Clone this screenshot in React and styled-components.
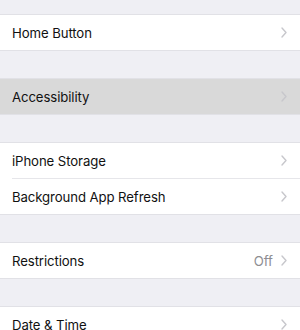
import React from "react";
import styled, { createGlobalStyle } from "styled-components";

const Global = createGlobalStyle`
  html, body { margin: 0; padding: 0; background: #efeff4; }
  body { font-family: "Inter", "Liberation Sans", sans-serif; -webkit-font-smoothing: antialiased; }
`;

const Page = styled.div`
  width: 300px;
  height: 330px;
  overflow: hidden;
  background: #efeff4;
  padding-top: 14px;
  box-sizing: border-box;
  display: flex;
  flex-direction: column;
  gap: 27px;
`;

const Section = styled.div`
  background: #fff;
  border-top: 1px solid #e1e1e6;
  border-bottom: 1px solid #e1e1e6;
  display: flex;
  flex-direction: column;
  flex-shrink: 0;
`;

const Row = styled.div`
  height: 35px;
  display: flex;
  align-items: center;
  padding: 0 13px 0 12px;
  background: ${(p) => (p.$selected ? "#d9d9d9" : "#fff")};
  & + & {
    border-top: 1px solid #e6e6ea;
    margin-left: 12px;
    padding-left: 0;
  }
`;

const Label = styled.span`
  flex: 1;
  font-size: 13.2px;
  color: #111;
  letter-spacing: -0.1px;
`;

const Value = styled.span`
  font-size: 13.2px;
  color: #8e8e93;
  margin-right: 8px;
`;

const Chevron = () => (
  <svg width="6" height="11" viewBox="0 0 6 11" fill="none">
    <path d="M1 1l4 4.5L1 10" stroke="#c7c7cc" strokeWidth="1.4" strokeLinecap="round" strokeLinejoin="round" />
  </svg>
);

const Item = ({ label, value, selected }) => (
  <Row $selected={selected}>
    <Label>{label}</Label>
    {value && <Value>{value}</Value>}
    <Chevron />
  </Row>
);

export default function App() {
  return (
    <>
      <Global />
      <Page>
        <Section>
          <Item label="Home Button" />
        </Section>
        <Section>
          <Item label="Accessibility" selected />
        </Section>
        <Section>
          <Item label="iPhone Storage" />
          <Item label="Background App Refresh" />
        </Section>
        <Section>
          <Item label="Restrictions" value="Off" />
        </Section>
        <Section>
          <Item label="Date & Time" />
        </Section>
      </Page>
    </>
  );
}
